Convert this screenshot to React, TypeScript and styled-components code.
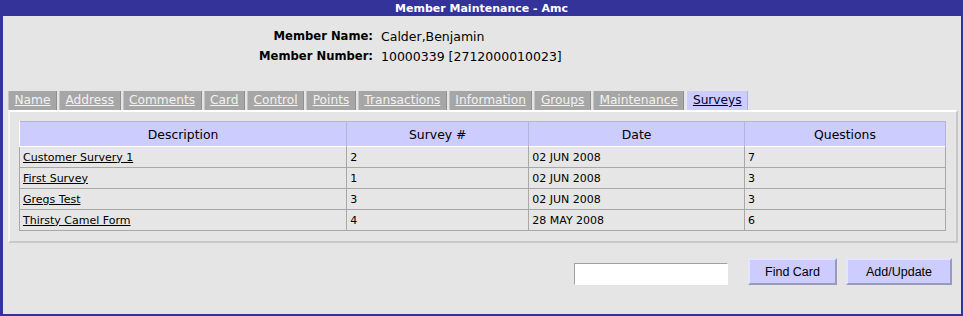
import styled, { createGlobalStyle } from 'styled-components';

const GlobalStyle = createGlobalStyle`
	html, body {
		margin: 0;
		padding: 0;
		background: #e5e5e5;
	}
	body {
		font-family: 'DejaVu Sans', Verdana, sans-serif;
	}
`;

const Window = styled.div`
	box-sizing: border-box;
	width: 963px;
	height: 316px;
	border: 2px solid #333399;
	border-top: 0;
	border-left-width: 3px;
	background: #e5e5e5;
	display: flex;
	flex-direction: column;
`;

const TitleBar = styled.div`
	height: 16px;
	background: #333399;
	color: #ffffff;
	font-weight: bold;
	font-size: 11px;
	line-height: 17px;
	text-align: center;
	margin: 0 -2px 0 -3px;
`;

const Info = styled.div`
	display: grid;
	grid-template-columns: 370px auto;
	column-gap: 8px;
	row-gap: 3px;
	padding-top: 12px;
	font-size: 12.5px;
	line-height: 17px;
	color: #000;
`;

const InfoLabel = styled.div`
	text-align: right;
	font-weight: bold;
	font-size: 11.6px;
`;

const Tabs = styled.div`
	display: flex;
	margin: 26px 0 0 5px;
	gap: 2px;
`;

const Tab = styled.a<{ $active?: boolean }>`
	box-sizing: border-box;
	height: 19px;
	padding: 0 5.5px;
	font-size: 12.2px;
	line-height: 19px;
	background: ${(p) => (p.$active ? '#ccccff' : '#a6a6a6')};
	color: ${(p) => (p.$active ? '#000033' : '#f2f2f2')};
	text-decoration: underline;
	border-left: 1px solid ${(p) => (p.$active ? '#e8e8ff' : '#c4c4c4')};
	border-right: 1px solid ${(p) => (p.$active ? '#b0b0e0' : '#909090')};
	cursor: pointer;
`;

const Panel = styled.div`
	margin: 0 3px 0 5px;
	padding: 9px 10px 10px 9px;
	border-top: 2px solid #ffffff;
	border-left: 2px solid #f4f4f4;
	border-right: 2px solid #c8c8c8;
	border-bottom: 2px solid #c8c8c8;
`;

const Table = styled.table`
	width: 100%;
	border-collapse: collapse;
	font-size: 11px;
	color: #000;
	border: 1px solid #b8b8b8;
`;

const HeadCell = styled.th<{ $width: number }>`
	width: ${(p) => p.$width}px;
	height: 24px;
	padding: 0;
	background: #ccccff;
	font-weight: normal;
	font-size: 12.4px;
	text-align: center;
	border-right: 1px solid #b4b4d8;
	border-left: 1px solid #ffffff;
`;

const Cell = styled.td`
	height: 20px;
	padding: 0 3px;
	border: 1px solid #a8a8a8;
	border-top-color: #ffffff;
	background: #e6e6e6;
`;

const SurveyLink = styled.a`
	color: #000;
	text-decoration: underline;
	cursor: pointer;
`;

const Actions = styled.div`
	display: flex;
	justify-content: flex-end;
	align-items: flex-end;
	gap: 9px;
	margin: 15px 9px 0 0;
`;

const SearchInput = styled.input`
	box-sizing: border-box;
	width: 154px;
	height: 22px;
	margin-right: 11px;
	border: 1px solid #ffffff;
	border-top-color: #a0a0a0;
	border-left-color: #a0a0a0;
	background: #ffffff;
	outline: none;
`;

const Button = styled.button<{ $width: number }>`
	box-sizing: border-box;
	width: ${(p) => p.$width}px;
	height: 27px;
	padding: 0;
	background: #ccccff;
	border: 2px solid #e4e4ff;
	border-right-color: #9a9ac0;
	border-bottom-color: #9a9ac0;
	font-family: 'Liberation Sans', Arial, sans-serif;
	font-size: 12.5px;
	color: #000;
	cursor: pointer;
`;

const tabs = [
	'Name',
	'Address',
	'Comments',
	'Card',
	'Control',
	'Points',
	'Transactions',
	'Information',
	'Groups',
	'Maintenance',
	'Surveys',
];

const surveys = [
	{ name: 'Customer Survery 1', id: 2, date: '02 JUN 2008', questions: 7 },
	{ name: 'First Survey', id: 1, date: '02 JUN 2008', questions: 3 },
	{ name: 'Gregs Test', id: 3, date: '02 JUN 2008', questions: 3 },
	{ name: 'Thirsty Camel Form', id: 4, date: '28 MAY 2008', questions: 6 },
];

export default function App() {
	return (
		<>
			<GlobalStyle />
			<Window>
				<TitleBar>Member Maintenance - Amc</TitleBar>
				<Info>
					<InfoLabel>Member Name:</InfoLabel>
					<div>Calder,Benjamin</div>
					<InfoLabel>Member Number:</InfoLabel>
					<div>10000339 [2712000010023]</div>
				</Info>
				<Tabs>
					{tabs.map((t) => (
						<Tab key={t} $active={t === 'Surveys'}>
							{t}
						</Tab>
					))}
				</Tabs>
				<Panel>
					<Table>
						<thead>
							<tr>
								<HeadCell $width={328}>Description</HeadCell>
								<HeadCell $width={182}>Survey #</HeadCell>
								<HeadCell $width={216}>Date</HeadCell>
								<HeadCell $width={201}>Questions</HeadCell>
							</tr>
						</thead>
						<tbody>
							{surveys.map((s) => (
								<tr key={s.id}>
									<Cell>
										<SurveyLink>{s.name}</SurveyLink>
									</Cell>
									<Cell>{s.id}</Cell>
									<Cell>{s.date}</Cell>
									<Cell>{s.questions}</Cell>
								</tr>
							))}
						</tbody>
					</Table>
				</Panel>
				<Actions>
					<SearchInput type="text" />
					<Button $width={89}>Find Card</Button>
					<Button $width={106}>Add/Update</Button>
				</Actions>
			</Window>
		</>
	);
}
